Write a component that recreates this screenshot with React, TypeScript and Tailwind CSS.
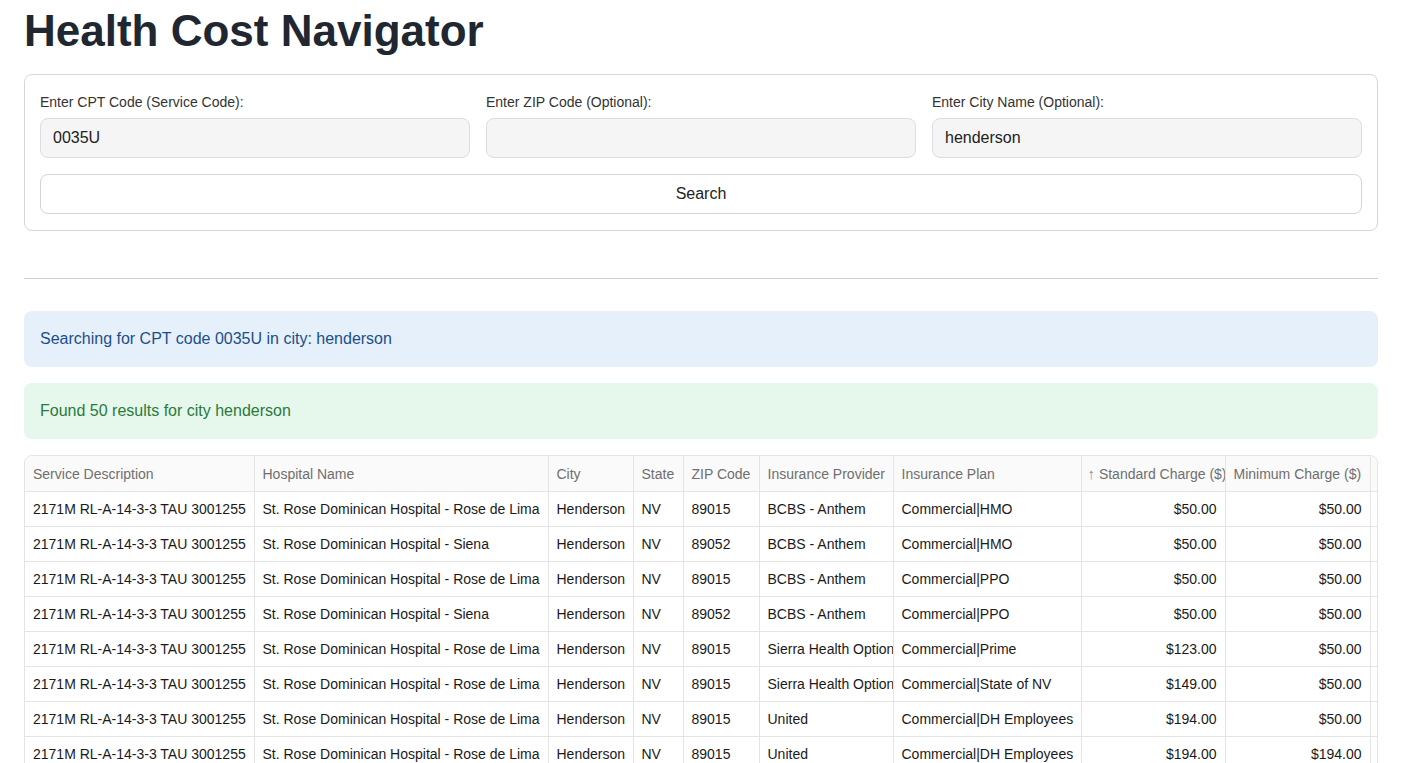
import React from "react";

const rows = [
  ["St. Rose Dominican Hospital - Rose de Lima", "89015", "BCBS - Anthem", "Commercial|HMO", "$50.00", "$50.00"],
  ["St. Rose Dominican Hospital - Siena", "89052", "BCBS - Anthem", "Commercial|HMO", "$50.00", "$50.00"],
  ["St. Rose Dominican Hospital - Rose de Lima", "89015", "BCBS - Anthem", "Commercial|PPO", "$50.00", "$50.00"],
  ["St. Rose Dominican Hospital - Siena", "89052", "BCBS - Anthem", "Commercial|PPO", "$50.00", "$50.00"],
  ["St. Rose Dominican Hospital - Rose de Lima", "89015", "Sierra Health Options", "Commercial|Prime", "$123.00", "$50.00"],
  ["St. Rose Dominican Hospital - Rose de Lima", "89015", "Sierra Health Options", "Commercial|State of NV", "$149.00", "$50.00"],
  ["St. Rose Dominican Hospital - Rose de Lima", "89015", "United", "Commercial|DH Employees", "$194.00", "$50.00"],
  ["St. Rose Dominican Hospital - Rose de Lima", "89015", "United", "Commercial|DH Employees", "$194.00", "$194.00"],
  ["St. Rose Dominican Hospital - Siena", "89052", "United", "Commercial|DH Employees", "$194.00", "$194.00"],
];

const th = "border-b border-r border-[#e4e4e4] px-2 pt-[8px] pb-[7px] text-left font-normal text-[#6f6f6f] whitespace-nowrap overflow-hidden";
const td = "border-b border-r border-[#e4e4e4] px-2 py-[7px] text-[#1a1a1a] whitespace-nowrap overflow-hidden";

export default function App() {
  return (
    <div
      className="h-screen overflow-hidden bg-white pl-6 pr-[23px]"
      style={{ fontFamily: '"Liberation Sans", Arial, sans-serif' }}
    >
      <h1 className="pt-[5px] text-[44px] font-bold leading-[52px] text-[#212731]">Health Cost Navigator</h1>

      <div className="mt-[17px] rounded-lg border border-[#d6d6d6] px-[15px] pt-[15px] pb-4">
        <div className="grid grid-cols-3 gap-4">
          {[
            ["Enter CPT Code (Service Code):", "0035U"],
            ["Enter ZIP Code (Optional):", ""],
            ["Enter City Name (Optional):", "henderson"],
          ].map(([label, value]) => (
            <div key={label} className="flex flex-col">
              <label className="mt-[3px] text-[14px] leading-[18px] text-[#333]">{label}</label>
              <div className="mt-[7px] flex h-10 items-center rounded-lg border border-[#dcdce3] bg-[#f5f5f6] px-3 text-[16px] text-[#222]">
                {value}
              </div>
            </div>
          ))}
        </div>
        <div className="mt-4 flex h-10 items-center justify-center rounded-lg border border-[#d4d4d4] bg-white text-[16px] text-[#222]">
          Search
        </div>
      </div>

      <div className="mt-[47px] h-px bg-[#d0d0d0]" />

      <div className="mt-8 flex h-14 items-center rounded-lg bg-[#e6f0fb] px-4 text-[16px] text-[#1b4f8c]">
        Searching for CPT code 0035U in city: henderson
      </div>
      <div className="mt-4 flex h-14 items-center rounded-lg bg-[#e6f7ec] px-4 text-[16px] text-[#2b7a3b]">
        Found 50 results for city henderson
      </div>

      <div className="mt-4 overflow-hidden rounded-t-lg border border-[#e4e4e4]">
        <table className="table-fixed border-collapse text-[14px] leading-5" style={{ width: 1489 }}>
          <colgroup>
            <col style={{ width: 229 }} />
            <col style={{ width: 294 }} />
            <col style={{ width: 85 }} />
            <col style={{ width: 50 }} />
            <col style={{ width: 76 }} />
            <col style={{ width: 134 }} />
            <col style={{ width: 188 }} />
            <col style={{ width: 144 }} />
            <col style={{ width: 145 }} />
            <col style={{ width: 144 }} />
          </colgroup>
          <thead>
            <tr className="bg-[#fafafa]">
              <th className={th}>Service Description</th>
              <th className={th}>Hospital Name</th>
              <th className={th}>City</th>
              <th className={th}>State</th>
              <th className={th}>ZIP Code</th>
              <th className={th}>Insurance Provider</th>
              <th className={th}>Insurance Plan</th>
              <th className={th + " !pl-[6px]"}>
                <span className="text-[15px] text-[#9a8aa8]">↑</span> Standard Charge ($)
              </th>
              <th className={th}>Minimum Charge ($)</th>
              <th className={th}>Maximum Charge ($)</th>
            </tr>
          </thead>
          <tbody>
            {rows.map((r, i) => (
              <tr key={i}>
                <td className={td}>2171M RL-A-14-3-3 TAU 3001255</td>
                <td className={td}>{r[0]}</td>
                <td className={td}>Henderson</td>
                <td className={td}>NV</td>
                <td className={td}>{r[1]}</td>
                <td className={td + " !pr-0"}>{r[2]}</td>
                <td className={td}>{r[3]}</td>
                <td className={td + " text-right"}>{r[4]}</td>
                <td className={td + " text-right"}>{r[5]}</td>
                <td className={td + " text-right"}>{r[4]}</td>
              </tr>
            ))}
          </tbody>
        </table>
      </div>
    </div>
  );
}
